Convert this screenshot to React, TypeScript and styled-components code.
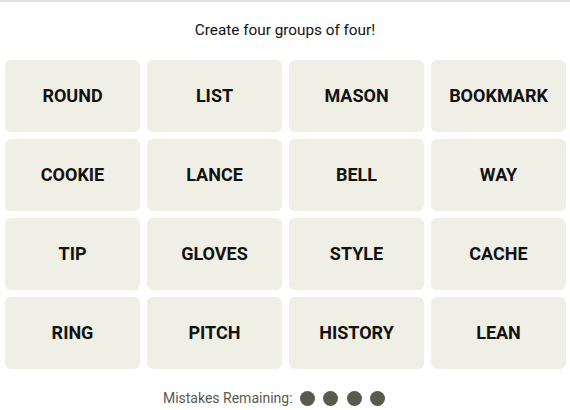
import styled, { createGlobalStyle } from 'styled-components';

const GlobalStyle = createGlobalStyle`
  html, body {
    margin: 0;
    padding: 0;
    background: #ffffff;
  }
  body {
    font-family: Roboto, 'Liberation Sans', Arial, sans-serif;
    color: #000000;
  }
`;

const WORDS = [
  'ROUND', 'LIST', 'MASON', 'BOOKMARK',
  'COOKIE', 'LANCE', 'BELL', 'WAY',
  'TIP', 'GLOVES', 'STYLE', 'CACHE',
  'RING', 'PITCH', 'HISTORY', 'LEAN',
];

const App = () => {
  const mistakesLeft = 4;

  return (
    <StPage>
      <GlobalStyle />
      <StTitle>Create four groups of four!</StTitle>
      <StBoard>
        {WORDS.map(word => (
          <StTile key={word}>{word}</StTile>
        ))}
      </StBoard>
      <StMistakes>
        <StMistakesLabel>Mistakes Remaining:</StMistakesLabel>
        <StDots>
          {Array.from({ length: mistakesLeft }).map((_, i) => (
            <StDot key={i} />
          ))}
        </StDots>
      </StMistakes>
    </StPage>
  );
};

const StPage = styled.div`
  width: 570px;
  height: 410px;
  box-sizing: border-box;
  border-top: 2px solid #e0e0e0;
  display: flex;
  flex-direction: column;
  align-items: center;
  overflow: hidden;
`;

const StTitle = styled.div`
  margin-top: 18px;
  font-size: 15.3px;
  line-height: 20px;
  color: #121212;
`;

const StBoard = styled.div`
  margin-top: 20px;
  align-self: flex-start;
  margin-left: 5px;
  display: grid;
  grid-template-columns: repeat(4, 135px);
  grid-auto-rows: 72px;
  gap: 7px;
`;

const StTile = styled.div`
  display: flex;
  align-items: center;
  justify-content: center;
  padding-bottom: 2px;
  box-sizing: border-box;
  background: #efefe6;
  border-radius: 6px;
  font-size: 18px;
  font-weight: 700;
  color: #121212;
`;

const StMistakes = styled.div`
  margin-top: 21px;
  display: flex;
  align-items: center;
  gap: 7px;
  padding-right: 22px;
`;

const StMistakesLabel = styled.span`
  font-size: 14px;
  color: #5a594e;
`;

const StDots = styled.div`
  display: flex;
  gap: 8.5px;
`;

const StDot = styled.span`
  width: 15px;
  height: 15px;
  border-radius: 50%;
  background: #5a594e;
`;

export default App;
